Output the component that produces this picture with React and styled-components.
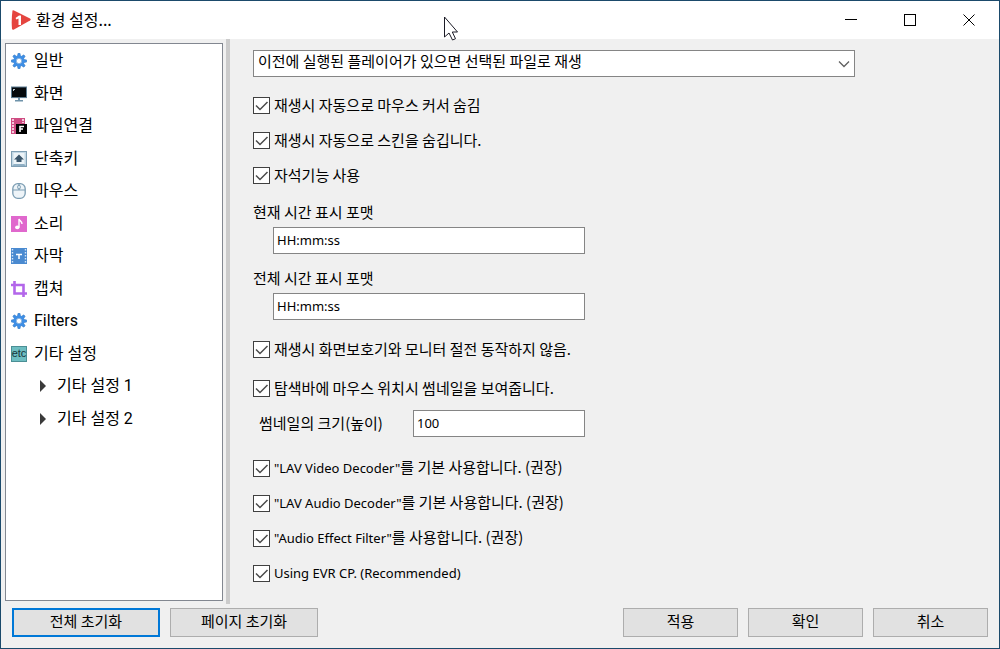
import { useState } from "react";
import styled, { createGlobalStyle } from "styled-components";

function GearIcon() {
    return (
        <svg width="16" height="16" viewBox="0 0 16 16">
            {[0, 45, 90, 135, 180, 225, 270, 315].map((angle) => (
                <path
                    key={angle}
                    d="M7 0.300h2l0.700 3.400H6.300z"
                    fill="#3f8fe6"
                    stroke="#2f74bd"
                    strokeWidth="0.500"
                    transform={`rotate(${angle} 8 8)`}
                />
            ))}
            <circle cx="8" cy="8" r="4.1" fill="#fff" stroke="#3f8fe6" strokeWidth="2.600" />
            <circle cx="8" cy="8" r="2.700" fill="#fff" stroke="#2f74bd" strokeWidth="0.500" />
        </svg>
    );
}

function MonitorIcon() {
    return (
        <svg width="16" height="16" viewBox="0 0 16 16">
            <rect x="0.5" y="1" width="15" height="10.6" fill="#05090c" stroke="#5d7d92" />
            <path d="M2 3h2v1H3v1H2z" fill="#b9c6cf" />
            <rect x="7" y="12" width="2" height="2" fill="#6f93aa" />
            <rect x="4" y="14" width="8" height="1.5" fill="#6f93aa" />
        </svg>
    );
}

function FileIcon() {
    return (
        <svg width="16" height="16" viewBox="0 0 16 16">
            <rect width="14" height="16" fill="#cf4c82" />
            <path d="M1 1h2v2H1zM1 4h2v2H1zM1 7h2v2H1zM1 10h2v2H1zM1 13h2v2H1zM11 1h2v2h-2zM11 4h2v1h-2z" fill="#f3c9da" />
            <rect x="5" y="6" width="11" height="10" fill="#000" />
            <path d="M9 14V8.5h4M9 11h3" fill="none" stroke="#fff" strokeWidth="1.6" />
        </svg>
    );
}

function KeyIcon() {
    return (
        <svg width="16" height="16" viewBox="0 0 16 16">
            <rect x="0.5" y="0.5" width="15" height="15" fill="#c3d8e5" stroke="#7f9fb4" />
            <rect x="2.500" y="2" width="11" height="11" fill="#edf4f8" />
            <path d="M8 3.500l5 5h-2.500v2.500h-5V8.500H3z" fill="#3b566b" />
            <path d="M1 15l2-2h10l2 2z" fill="#8fafc4" />
        </svg>
    );
}

function MouseIcon() {
    return (
        <svg width="16" height="16" viewBox="0 0 16 16">
            <rect x="1.8" y="0.7" width="12.4" height="14.6" rx="5" fill="#eef4f8" stroke="#7a9cb2" strokeWidth="1.3" />
            <path d="M2 7h12M8 1v2M8 5v2" stroke="#7a9cb2" strokeWidth="1.2" />
            <rect x="6.6" y="2.4" width="2.8" height="3.4" rx="1.2" fill="#dbe8f0" stroke="#7a9cb2" />
        </svg>
    );
}

function SoundIcon() {
    return (
        <svg width="16" height="16" viewBox="0 0 16 16">
            <rect width="16" height="16" fill="#e068cd" />
            <path d="M8 11.5V3c.4 2 3.2 2 3 5" fill="none" stroke="#fff" strokeWidth="1.4" />
            <ellipse cx="6.3" cy="11.4" rx="2.2" ry="1.8" fill="#fff" />
        </svg>
    );
}

function SubtitleIcon() {
    return (
        <svg width="16" height="16" viewBox="0 0 16 16">
            <rect width="16" height="16" fill="#4a8ad0" />
            <path d="M1.5 1v15M14.5 1v15" stroke="#d5e6f7" strokeWidth="1.4" strokeDasharray="1.6 1.4" />
            <path d="M5 6.4h6M8 6.4V11" stroke="#fff" strokeWidth="1.5" />
        </svg>
    );
}

function CropIcon() {
    return (
        <svg width="16" height="16" viewBox="0 0 16 16">
            <path d="M3.500 0v12.500H16M0 4h12.500v12" fill="none" stroke="#b366ea" strokeWidth="2.600" />
        </svg>
    );
}

function EtcIcon() {
    return (
        <svg width="16" height="16" viewBox="0 0 16 16">
            <rect x="0.5" y="0.5" width="15" height="15" fill="#6dbdc1" stroke="#4b8f95" />
            <text x="8" y="11" textAnchor="middle" fontFamily="Liberation Sans" fontSize="11" fill="#16343a">etc</text>
        </svg>
    );
}

function ArrowIcon() {
    return (
        <svg width="8" height="12" viewBox="0 0 8 12">
            <path d="M1 0l6 6-6 6z" fill="#3a3a3a" />
        </svg>
    );
}

function LogoIcon() {
    return (
        <svg width="20" height="20" viewBox="0 0 20 20">
            <path d="M1.500 0.500q0.500-0.500 1.500 0L19 8.500q1.500 1 0 2L3 19.500q-1.500 0.700-2-0.500-0.800-9 0.500-18.500z" fill="#e5453f" />
            <path d="M4.500 8l3.500-2.500h2v9.500H7.500V8.500L5.500 9.500z" fill="#fff" />
        </svg>
    );
}

const menu = [
    { nome: "일반", Icon: GearIcon },
    { nome: "화면", Icon: MonitorIcon },
    { nome: "파일연결", Icon: FileIcon },
    { nome: "단축키", Icon: KeyIcon },
    { nome: "마우스", Icon: MouseIcon },
    { nome: "소리", Icon: SoundIcon },
    { nome: "자막", Icon: SubtitleIcon },
    { nome: "캡쳐", Icon: CropIcon },
    { nome: "Filters", Icon: GearIcon },
    { nome: "기타 설정", Icon: EtcIcon },
    { nome: "기타 설정 1", Icon: ArrowIcon, sub: true },
    { nome: "기타 설정 2", Icon: ArrowIcon, sub: true },
];

function Opcao({ latin, children }) {
    const [marcado, setMarcado] = useState(true);

    return (
        <Linha>
            <Caixa>
                <input type="checkbox" checked={marcado} onChange={() => setMarcado(!marcado)} />
                {marcado && (
                    <svg width="17" height="17" viewBox="0 0 17 17">
                        <path d="M3 8.500l4 4 7.500-7.500" fill="none" stroke="#4a4a4a" strokeWidth="1.500" />
                    </svg>
                )}
            </Caixa>
            <Rotulo>
                {latin && <Latin>{latin}</Latin>}
                {children}
            </Rotulo>
        </Linha>
    );
}

export default function App() {
    const [atual, setAtual] = useState("HH:mm:ss");
    const [total, setTotal] = useState("HH:mm:ss");
    const [altura, setAltura] = useState("100");

    return (
        <>
            <GlobalStyle />
            <Janela>
                <Barra>
                    <LogoIcon />
                    <Titulo>환경 설정...</Titulo>
                    <BotaoJanela aria-label="최소화">
                        <svg width="12" height="12"><path d="M0 5.500h12" stroke="#000" /></svg>
                    </BotaoJanela>
                    <BotaoJanela aria-label="최대화">
                        <svg width="12" height="12"><rect x="0.500" y="0.500" width="11" height="11" fill="none" stroke="#000" /></svg>
                    </BotaoJanela>
                    <BotaoJanela aria-label="닫기">
                        <svg width="12" height="12"><path d="M0.500 0.500l11 11M11.500 0.500l-11 11" stroke="#000" /></svg>
                    </BotaoJanela>
                </Barra>
                <Corpo>
                    <Lateral>
                        <Lista>
                            {menu.map(({ nome, Icon, sub }) => (
                                <li key={nome}>
                                    <Item $sub={sub} type="button">
                                        <Icon />
                                        {nome}
                                    </Item>
                                </li>
                            ))}
                        </Lista>
                    </Lateral>
                    <Divisor />
                    <Formulario>
                        <Selecao>
                            <select aria-label="실행 방식">
                                <option>이전에 실행된 플레이어가 있으면 선택된 파일로 재생</option>
                            </select>
                            <svg width="12" height="8" viewBox="0 0 12 8">
                                <path d="M1 1.500l5 5 5-5" fill="none" stroke="#606060" strokeWidth="1.300" />
                            </svg>
                        </Selecao>
                        <Grupo>
                            <Opcao>재생시 자동으로 마우스 커서 숨김</Opcao>
                            <Opcao>재생시 자동으로 스킨을 숨깁니다.</Opcao>
                            <Opcao>자석기능 사용</Opcao>
                        </Grupo>
                        <Formatos>
                            <Campo>
                                <label htmlFor="atual">현재 시간 표시 포맷</label>
                                <Texto id="atual" value={atual} onChange={(e) => setAtual(e.target.value)} />
                            </Campo>
                            <Campo>
                                <label htmlFor="total">전체 시간 표시 포맷</label>
                                <Texto id="total" value={total} onChange={(e) => setTotal(e.target.value)} />
                            </Campo>
                        </Formatos>
                        <Grupo $gap={4}>
                            <Opcao>재생시 화면보호기와 모니터 절전 동작하지 않음.</Opcao>
                            <Opcao>탐색바에 마우스 위치시 썸네일을 보여줍니다.</Opcao>
                        </Grupo>
                        <Miniatura>
                            <label htmlFor="altura">썸네일의 크기(높이)</label>
                            <Texto id="altura" value={altura} onChange={(e) => setAltura(e.target.value)} />
                        </Miniatura>
                        <Grupo>
                            <Opcao latin={'"LAV Video Decoder"'}>를 기본 사용합니다. (권장)</Opcao>
                            <Opcao latin={'"LAV Audio Decoder"'}>를 기본 사용합니다. (권장)</Opcao>
                            <Opcao latin={'"Audio Effect Filter"'}>를 사용합니다. (권장)</Opcao>
                            <Opcao latin="Using EVR CP. (Recommended)" />
                        </Grupo>
                    </Formulario>
                </Corpo>
                <Rodape>
                    <Botao $largo $foco>전체 초기화</Botao>
                    <Botao $largo>페이지 초기화</Botao>
                    <Espaco />
                    <Botao>적용</Botao>
                    <Botao>확인</Botao>
                    <Botao>취소</Botao>
                </Rodape>
                <Cursor width="16" height="25" viewBox="0 0 16 25">
                    <path d="M1.500 1v20l4.500-4 3.500 7 3-1.300-3.200-6.700h5.200z" fill="#fff" stroke="#1b1b26" />
                </Cursor>
            </Janela>
        </>
    );
}

const GlobalStyle = createGlobalStyle`
    * {
        box-sizing: border-box;
    }
    body {
        margin: 0;
        color: #000;
        font-family: "Noto Sans CJK KR", sans-serif;
        font-size: 15px;
        line-height: 20px;
    }
    button, input, select {
        margin: 0;
        color: inherit;
        font: inherit;
    }
    svg {
        display: block;
        flex: none;
    }
`;
const Janela = styled.div`
    position: relative;
    display: flex;
    flex-direction: column;
    min-height: 100vh;
    border: 1px solid #1b4a6b;
    background-color: #f0f0f0;
`;
const Barra = styled.header`
    display: flex;
    align-items: center;
    height: 38px;
    padding: 0 1px 0 10px;
    background-color: #fff;
`;
const Titulo = styled.h1`
    flex: 1;
    margin: 0 0 0 5px;
    padding-bottom: 2px;
    font-size: 16px;
    font-weight: normal;
`;
const BotaoJanela = styled.button`
    display: flex;
    align-items: center;
    justify-content: center;
    width: 59px;
    height: 38px;
    padding: 0;
    border: none;
    background: none;
`;
const Corpo = styled.div`
    flex: 1;
    display: flex;
`;
const Lateral = styled.nav`
    width: 218px;
    margin: 4px 3px 3px 4px;
    border: 1px solid #828790;
    background-color: #fff;
`;
const Lista = styled.ul`
    display: grid;
    grid-template-rows: repeat(12, 1fr);
    height: 390px;
    margin: 1px 0 0;
    padding: 0;
    list-style: none;
`;
const Item = styled.button`
    display: flex;
    align-items: center;
    gap: ${({ $sub }) => ($sub ? 10 : 7)}px;
    width: 100%;
    height: 100%;
    padding: 0 0 0 ${({ $sub }) => ($sub ? 33 : 5)}px;
    border: none;
    background: none;
    font-family: Roboto, "Noto Sans CJK KR", sans-serif;
    font-size: 16px;
    text-align: left;
`;
const Rotulo = styled.span`
    padding-bottom: 2px;
`;
const Divisor = styled.div`
    width: 4px;
    background-color: #cbcbcb;
`;
const Formulario = styled.form`
    flex: 1;
    padding: 11px 24px 0 23px;
`;
const Selecao = styled.div`
    display: grid;
    align-items: center;
    max-width: 602px;
    select {
        grid-area: 1 / 1;
        appearance: none;
        height: 27px;
        padding: 0 24px 5px 4px;
        border: 1px solid #858585;
        border-radius: 0;
        background-color: #fff;
    }
    svg {
        grid-area: 1 / 1;
        justify-self: end;
        margin-right: 5px;
        pointer-events: none;
    }
`;
const Grupo = styled.div`
    display: flex;
    flex-direction: column;
    align-items: flex-start;
    gap: ${({ $gap }) => $gap || 0}px;
    margin-top: 11px;
`;
const Linha = styled.label`
    display: flex;
    align-items: center;
    gap: 4px;
    height: 35px;
    white-space: nowrap;
`;
const Caixa = styled.span`
    display: grid;
    input {
        grid-area: 1 / 1;
        appearance: none;
        width: 17px;
        height: 17px;
        border: 1px solid #404040;
        background-color: #fff;
    }
    svg {
        grid-area: 1 / 1;
        pointer-events: none;
    }
`;
const Latin = styled.span`
    font-family: "Noto Sans", sans-serif;
    font-size: 13px;
`;
const Formatos = styled.div`
    display: flex;
    flex-direction: column;
    gap: 14px;
    margin: 9px 0 12px;
`;
const Campo = styled.div`
    display: grid;
    gap: 5px;
    justify-items: start;
    input {
        width: 312px;
        margin-left: 20px;
    }
`;
const Texto = styled.input`
    height: 27px;
    padding: 0 3px 2px;
    border: 1px solid #858585;
    background-color: #fff;
    font-family: "Noto Sans", sans-serif;
    font-size: 13px;
`;
const Miniatura = styled.div`
    display: flex;
    align-items: center;
    margin: 4px 0 14px;
    padding-left: 6px;
    label {
        width: 154px;
        padding-bottom: 2px;
    }
    input {
        width: 172px;
    }
`;
const Rodape = styled.footer`
    display: flex;
    gap: 10px;
    padding: 4px 11px 11px;
`;
const Espaco = styled.div`
    flex: 1;
`;
const Botao = styled.button`
    width: ${({ $largo }) => ($largo ? 148 : 115)}px;
    height: 29px;
    padding: 0 0 3px;
    border: ${({ $foco }) => ($foco ? "2px solid #0078d7" : "1px solid #adadad")};
    background-color: #e1e1e1;
`;
const Cursor = styled.svg`
    position: absolute;
    top: 15px;
    left: 442px;
    pointer-events: none;
`;
